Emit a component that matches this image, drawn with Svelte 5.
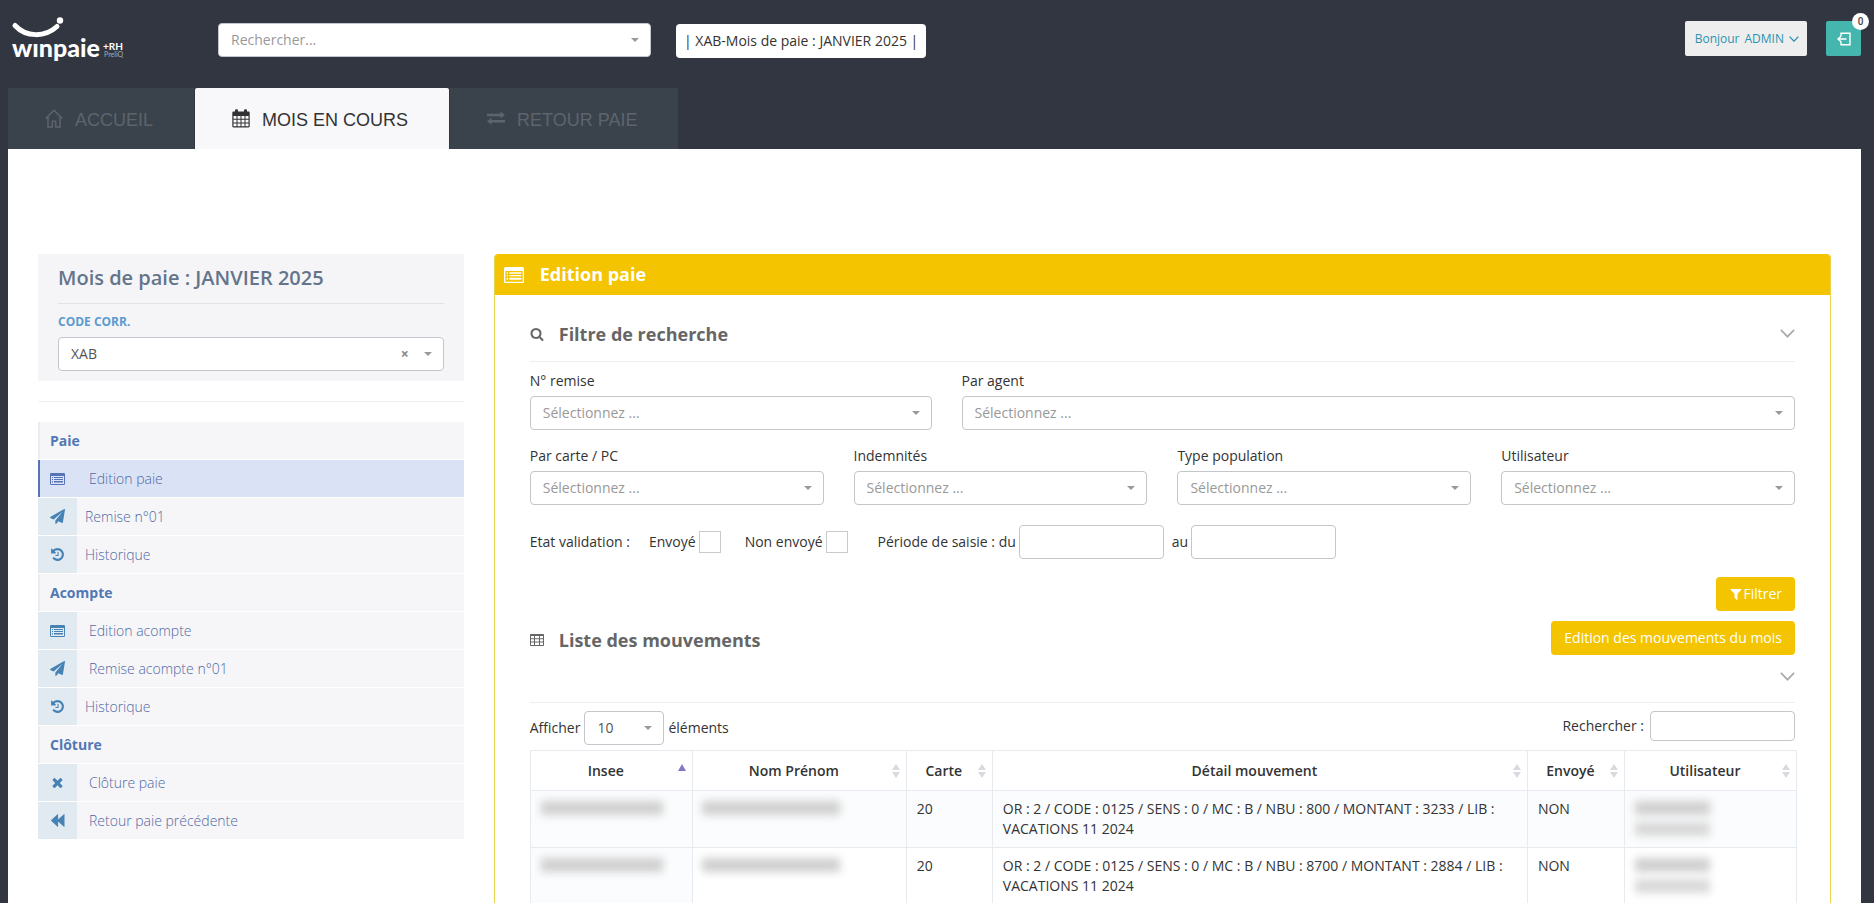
<script>
  const tabs = [
    { icon: 'home', label: 'ACCUEIL' },
    { icon: 'calendar', label: 'MOIS EN COURS', active: true },
    { icon: 'exchange', label: 'RETOUR PAIE' }
  ];
  const menu = [
    { head: 'Paie' },
    { icon: 'list', label: 'Edition paie', wide: true, active: true },
    { icon: 'plane', label: 'Remise n°01' },
    { icon: 'history', label: 'Historique' },
    { head: 'Acompte' },
    { icon: 'list', label: 'Edition acompte', wide: true },
    { icon: 'plane', label: 'Remise acompte n°01', wide: true },
    { icon: 'history', label: 'Historique' },
    { head: 'Clôture' },
    { icon: 'times', label: 'Clôture paie', wide: true },
    { icon: 'backward', label: 'Retour paie précédente', wide: true }
  ];
  const filters = [
    { id: 'remise', label: 'N° remise', span: 4 },
    { id: 'agent', label: 'Par agent', span: 8 },
    { id: 'carte', label: 'Par carte / PC', span: 3 },
    { id: 'indemnites', label: 'Indemnités', span: 3 },
    { id: 'population', label: 'Type population', span: 3 },
    { id: 'utilisateur', label: 'Utilisateur', span: 3 }
  ];
  const columns = [
    { label: 'Insee', share: 162, sorted: true },
    { label: 'Nom Prénom', share: 214 },
    { label: 'Carte', share: 86 },
    { label: 'Détail mouvement', share: 535 },
    { label: 'Envoyé', share: 97 },
    { label: 'Utilisateur', share: 172 }
  ];
  const total = columns.reduce((sum, c) => sum + c.share, 0);
  const rows = [
    { carte: '20', detail: 'OR : 2 / CODE : 0125 / SENS : 0 / MC : B / NBU : 800 / MONTANT : 3233 / LIB : VACATIONS 11 2024', sent: 'NON' },
    { carte: '20', detail: 'OR : 2 / CODE : 0125 / SENS : 0 / MC : B / NBU : 8700 / MONTANT : 2884 / LIB : VACATIONS 11 2024', sent: 'NON' }
  ];
</script>

{#snippet icon(name, size)}
  {#if name === 'home'}
    <svg width="18" height="19" viewBox="0 0 18 19" fill="none" stroke="currentColor" stroke-width="1.500" aria-hidden="true"><path d="M.7 9.500 9 1.200l8.300 8.300M3 8v10h4.300v-5.700h3.400V18H15V8" /></svg>
  {:else if name === 'calendar'}
    <svg width="18" height="19" viewBox="0 0 18 19" aria-hidden="true"><path fill="currentColor" fill-rule="evenodd" d="M1.500 2.500H3V1.700C3 .8 3.600.3 4.500.3S6 .8 6 1.700v.8h6v-.8c0-.9.6-1.400 1.500-1.400s1.500.5 1.500 1.400v.8h1.500c.7 0 1.200.5 1.200 1.200v13.600c0 .7-.5 1.200-1.200 1.200h-15c-.7 0-1.200-.5-1.200-1.200V3.700c0-.7.5-1.200 1.200-1.200zM1.500 7v2.700h3V7zm4 0v2.700h3V7zm4 0v2.700h3V7zm4 0v2.700h3V7zm-12 3.700v2.800h3v-2.800zm4 0v2.800h3v-2.800zm4 0v2.800h3v-2.800zm4 0v2.800h3v-2.800zm-12 3.800v2.700h3v-2.700zm4 0v2.700h3v-2.700zm4 0v2.700h3v-2.700zm4 0v2.700h3v-2.700z" /></svg>
  {:else if name === 'exchange'}
    <svg width="18" height="14" viewBox="0 0 18 14" fill="currentColor" aria-hidden="true"><path d="M0 2.700h13.500V.4L18 4l-4.500 3.500V5.200H0zM18 8.900H4.500V6.600L0 10.200l4.500 3.500v-2.300H18z" /></svg>
  {:else if name === 'list'}
    <svg width={size} height={size * 0.8} viewBox="0 0 15 12" aria-hidden="true"><path fill="currentColor" fill-rule="evenodd" d="M1.200 0h12.600C14.500 0 15 .5 15 1.200v9.600c0 .7-.5 1.200-1.200 1.200H1.200C.5 12 0 11.500 0 10.800V1.200C0 .5.5 0 1.200 0zM1 3v8h13V3zm1 1h1v1H2zm2 0h9v1H4zM2 6h1v1H2zm2 0h9v1H4zM2 8h1v1.500H2zm2 0h9v1.500H4z" /></svg>
  {:else if name === 'grid'}
    <svg width="14" height="12" viewBox="0 0 14 12" aria-hidden="true"><path fill="currentColor" fill-rule="evenodd" d="M1 0h12c.6 0 1 .4 1 1v10c0 .6-.4 1-1 1H1c-.6 0-1-.4-1-1V1c0-.6.4-1 1-1zm0 2v2.300h3V2zm4 0v2.300h4V2zm5 0v2.300h3V2zM1 5.300v2.300h3V5.300zm4 0v2.300h4V5.300zm5 0v2.300h3V5.300zM1 8.600V11h3V8.600zm4 0V11h4V8.600zm5 0V11h3V8.600z" /></svg>
  {:else if name === 'backward'}
    <svg width="14" height="13" viewBox="0 0 14 13" fill="currentColor" aria-hidden="true"><path d="M.3 6.100 6.600.2c.2-.2.5 0 .5.300v5l5.800-5.300c.3-.2.600 0 .6.300v12c0 .3-.3.500-.6.300L7.100 7.500v5c0 .3-.3.500-.5.300L.3 6.900c-.3-.3-.3-.5 0-.8z" /></svg>
  {:else if name === 'chevron'}
    <svg width={size} height={size * 0.6} viewBox="0 0 15 9" fill="none" stroke="currentColor" stroke-width={size > 12 ? 1.7 : 2} aria-hidden="true"><path d="M.9.9 7.500 7.700 14.100.9" /></svg>
  {:else}
    <svg width={size} height={size} viewBox="0 0 1792 1792" fill="currentColor" aria-hidden="true">
      {#if name === 'plane'}
        <path d="M1764 11q33 24 27 64l-256 1536q-5 29-32 45-14 8-31 8-11 0-24-5l-453-185-242 295q-18 23-49 23-13 0-22-4-19-7-30.500-23.500t-11.500-36.500v-349l864-1059-1069 925-395-162q-37-14-40-55-2-40 32-59l1664-960q15-9 32-9 20 0 36 11z" />
      {:else if name === 'history'}
        <path d="M1664 896q0 156-61 298t-164 245-245 164-298 61q-172 0-327-72.500t-264-204.500q-7-10-6.500-22.500t8.500-20.500l137-138q10-9 25-9 16 2 23 12 73 95 179 147t225 52q104 0 198.500-40.500t163.500-109.500 109.500-163.500 40.500-198.500-40.500-198.500-109.500-163.500-163.500-109.500-198.500-40.500q-98 0-188 35.500t-160 101.500l137 138q31 30 14 69-17 40-59 40h-448q-26 0-45-19t-19-45v-448q0-42 40-59 39-17 69 14l130 129q107-101 244.500-156.500t284.500-55.500q156 0 298 61t245 164 164 245 61 298zm-640-288v448q0 14-9 23t-23 9h-320q-14 0-23-9t-9-23v-64q0-14 9-23t23-9h224v-352q0-14 9-23t23-9h64q14 0 23 9t9 23z" />
      {:else if name === 'times'}
        <path d="M1490 1322q0 40-28 68l-136 136q-28 28-68 28t-68-28l-294-294-294 294q-28 28-68 28t-68-28l-136-136q-28-28-28-68t28-68l294-294-294-294q-28-28-28-68t28-68l136-136q28-28 68-28t68 28l294 294 294-294q28-28 68-28t68 28l136 136q28 28 28 68t-28 68l-294 294 294 294q28 28 28 68z" />
      {:else if name === 'search'}
        <path d="M1216 832q0-185-131.500-316.500t-316.500-131.500-316.500 131.500-131.500 316.500 131.500 316.500 316.500 131.500 316.500-131.500 131.500-316.500zm512 832q0 52-38 90t-90 38q-54 0-90-38l-343-342q-179 124-399 124-143 0-273.500-55.500t-225-150-150-225-55.500-273.500 55.500-273.500 150-225 225-150 273.500-55.500 273.500 55.500 225 150 150 225 55.500 273.500q0 220-124 399l343 343q37 37 37 90z" />
      {:else if name === 'filter'}
        <path d="M1595 295q17 41-14 70l-493 493v742q0 42-39 59-13 5-25 5-27 0-45-19l-256-256q-19-19-19-45v-486l-493-493q-31-29-14-70 17-39 59-39h1280q42 0 59 39z" />
      {/if}
    </svg>
  {/if}
{/snippet}

<div class="shell">
  <header>
    <a class="logo" href="#accueil" aria-label="winpaie">
      <svg width="120" height="50" viewBox="0 0 120 50" fill="#fff">
        <path d="M7 11.500C18 23.500 37 23.500 49 12.500" fill="none" stroke="#fff" stroke-width="5" stroke-linecap="round" />
        <circle cx="52" cy="6.500" r="3.200" />
        <text class="brand" x="4" y="43">wınpaie</text>
        <text class="plus" x="95" y="36">+RH</text>
        <text class="sub" x="96" y="43">PreliQ</text>
      </svg>
    </a>
    <div class="select search">
      <select aria-label="Rechercher" class="empty"><option>Rechercher...</option></select>
    </div>
    <div class="month">| XAB-Mois de paie : JANVIER 2025 |</div>
    <div class="account">
      <button class="user" type="button"><span>Bonjour</span><span>ADMIN</span>{@render icon('chevron', 10)}</button>
      <button class="logout" type="button" aria-label="Déconnexion">
        <svg width="14" height="14" viewBox="0 0 14 14" fill="none" stroke="#fff" stroke-width="1.400" aria-hidden="true"><path d="M4 4V1.200h9v11.600H4V10M9.500 7H1M4.200 3.900 1 7l3.200 3.100" /></svg>
        <span class="badge">0</span>
      </button>
    </div>
  </header>

  <nav class="tabs">
    {#each tabs as tab}
      <a href="#tab" class:active={tab.active}><span class="tabicon">{@render icon(tab.icon, 18)}</span>{tab.label}</a>
    {/each}
  </nav>

  <main>
    <aside>
      <section class="period">
        <h2>Mois de paie : JANVIER 2025</h2>
        <label for="code">CODE CORR.</label>
        <div class="select">
          <select id="code"><option>XAB</option></select>
          <button class="clear" type="button" aria-label="Effacer">×</button>
        </div>
      </section>
      <hr />
      <ul class="menu">
        {#each menu as item}
          <li>
            {#if item.head}
              <div class="head">{item.head}</div>
            {:else}
              <a href="#menu" class:active={item.active}>
                <span class="cell">{@render icon(item.icon, 15)}</span>
                <span class="name" class:wide={item.wide}>{item.label}</span>
              </a>
            {/if}
          </li>
        {/each}
      </ul>
    </aside>

    <section class="panel">
      <h1>{@render icon('list', 20)}Edition paie</h1>
      <div class="body">
        <div class="title">
          {@render icon('search', 14)}
          <h3>Filtre de recherche</h3>
          <button class="toggle" type="button" aria-label="Replier le filtre">{@render icon('chevron', 15)}</button>
        </div>
        <form onsubmit={(e) => e.preventDefault()}>
          <div class="fields">
            {#each filters as f}
              <div class="field" style:grid-column={`span ${f.span}`}>
                <label for={f.id}>{f.label}</label>
                <div class="select">
                  <select id={f.id} class="empty"><option>Sélectionnez ...</option></select>
                </div>
              </div>
            {/each}
          </div>
          <div class="state">
            <span class="lead">Etat validation :</span>
            <label>Envoyé<input type="checkbox" /></label>
            <label>Non envoyé<input type="checkbox" /></label>
            <label class="dates">Période de saisie : du<input type="text" /></label>
            <label>au<input type="text" /></label>
          </div>
          <div class="submit">
            <button class="primary" type="submit">{@render icon('filter', 14)}Filtrer</button>
          </div>
        </form>

        <div class="title list">
          {@render icon('grid', 14)}
          <h3>Liste des mouvements</h3>
          <div class="tools">
            <button class="primary" type="button">Edition des mouvements du mois</button>
            <button class="toggle" type="button" aria-label="Replier la liste">{@render icon('chevron', 15)}</button>
          </div>
        </div>

        <div class="controls">
          <label for="length">Afficher</label>
          <div class="select length"><select id="length"><option>10</option></select></div>
          <span>éléments</span>
          <label class="find">Rechercher :<input type="search" /></label>
        </div>

        <table>
          <colgroup>
            {#each columns as c}<col style:width={`${(c.share / total) * 100}%`} />{/each}
          </colgroup>
          <thead>
            <tr>
              {#each columns as c}
                <th scope="col">{c.label}<i class:sorted={c.sorted}></i></th>
              {/each}
            </tr>
          </thead>
          <tbody>
            {#each rows as r}
              <tr>
                <td class="hidden"><div class="mask insee"></div></td>
                <td class="hidden"><div class="mask fullname"></div></td>
                <td>{r.carte}</td>
                <td>{r.detail}</td>
                <td>{r.sent}</td>
                <td class="hidden"><div class="mask agent"></div><div class="mask agent second"></div></td>
              </tr>
            {/each}
          </tbody>
        </table>
      </div>
    </section>
  </main>
</div>

<style>
  :global(body) {
    margin: 0;
    background: #313641;
    overflow: hidden;
  }
  * {
    box-sizing: border-box;
  }
  .shell {
    min-height: 100vh;
    padding: 0 13px 0 8px;
    display: flex;
    flex-direction: column;
    font: 14px/20px 'Open Sans', sans-serif;
    color: #333;
  }
  svg {
    display: block;
    flex: none;
  }
  button,
  input,
  select {
    font: inherit;
  }
  button {
    cursor: pointer;
  }
  a {
    text-decoration: none;
  }
  h1,
  h2,
  h3 {
    margin: 0;
  }

  header {
    height: 88px;
    display: flex;
    align-items: flex-start;
  }
  .logo {
    width: 210px;
    padding-top: 14px;
  }
  .brand {
    font: 900 25px 'Lato', sans-serif;
  }
  .plus {
    font: 700 10px 'Lato', sans-serif;
  }
  .sub {
    font: 7px 'Lato', sans-serif;
    fill: #a9adb4;
  }
  .search {
    width: 433px;
    margin-top: 23px;
  }
  .month {
    margin: 24px 0 0 25px;
    padding: 7px 8px;
    border-radius: 4px;
    background: #fff;
    white-space: nowrap;
  }
  .account {
    margin: 21px 0 0 auto;
    display: flex;
    gap: 19px;
  }
  .user {
    height: 35px;
    padding: 0 8px 0 10px;
    border: 0;
    border-radius: 2px;
    background: #eee;
    color: #2b93ae;
    font-size: 12px;
    display: flex;
    align-items: center;
    gap: 5px;
  }
  .logout {
    position: relative;
    width: 35px;
    height: 35px;
    padding: 0 0 0 11px;
    border: 0;
    border-radius: 2px;
    background: #44b6ae;
  }
  .badge {
    position: absolute;
    top: -8px;
    right: -8px;
    width: 17px;
    height: 17px;
    border-radius: 50%;
    background: #fff;
    color: #444;
    font: 500 10px/17px 'Roboto', sans-serif;
    text-align: center;
  }

  .select {
    position: relative;
  }
  .select::after {
    content: '';
    position: absolute;
    right: 12px;
    top: 15px;
    border: 4px solid transparent;
    border-top-color: #999;
    border-bottom: 0;
    pointer-events: none;
  }
  select {
    display: block;
    width: 100%;
    height: 34px;
    padding: 0 24px 0 12px;
    border: 1px solid #c4c6cc;
    border-radius: 4px;
    background: #fff;
    color: #555;
    appearance: none;
  }
  .empty {
    color: #999;
  }
  .clear {
    position: absolute;
    right: 35px;
    top: 7px;
    padding: 0;
    border: 0;
    background: none;
    color: #888;
    font-weight: 700;
  }

  .tabs {
    display: flex;
    gap: 1px;
  }
  .tabs a {
    height: 61px;
    padding: 3px 41px 0 37px;
    display: flex;
    align-items: center;
    background: #3a424b;
    color: #5d646d;
    font: 18px/20px 'Liberation Sans', sans-serif;
  }
  .tabs .active {
    background: #f8f8fa;
    color: #333;
    border-radius: 2px 2px 0 0;
  }
  .tabicon {
    margin: 0 12px 4px 0;
  }

  main {
    flex: 1;
    padding: 105px 30px 0;
    background: #fff;
    display: grid;
    grid-template-columns: repeat(12, minmax(0, 1fr));
    column-gap: 30px;
  }
  aside {
    grid-column: span 3;
  }
  .period {
    padding: 9px 20px 10px;
    background: #f5f5f7;
  }
  h2 {
    padding: 0 0 11px;
    border-bottom: 1px solid #dfe2e6;
    color: #64748b;
    font-size: 20px;
    font-weight: 600;
    line-height: 29px;
  }
  .period label {
    display: block;
    padding: 8px 0 5px;
    color: #5b9bd1;
    font-size: 12px;
    font-weight: 700;
  }
  hr {
    margin: 20px 0;
    border: 0;
    border-top: 1px solid #eef0f2;
  }
  .menu {
    margin: 0;
    padding: 0;
    list-style: none;
    display: grid;
    gap: 1px;
  }
  .head,
  .menu a {
    height: 37px;
    display: flex;
    align-items: center;
    background: #f6f6f8;
  }
  .head {
    padding-left: 10px;
    border-left: 2px solid #e9edf1;
    color: #5178b4;
    font-weight: 700;
  }
  .menu a {
    color: #5068a4;
    font-weight: 300;
  }
  .cell {
    align-self: stretch;
    width: 39px;
    display: grid;
    place-items: center;
    background: #e1e9f1;
    color: #4682b4;
  }
  .name {
    padding-left: 8px;
  }
  .name.wide {
    padding-left: 12px;
  }
  .menu .active {
    background: #dae3f5;
    box-shadow: inset 2px 0 #5673b8;
  }
  .active .cell {
    background: none;
    color: #5673b8;
  }

  .panel {
    grid-column: span 9;
    border: 1px solid #e9d34c;
    border-top-color: #f4c400;
    border-bottom: 0;
    border-radius: 4px 4px 0 0;
  }
  h1 {
    height: 40px;
    padding: 0 9px 1px;
    display: flex;
    align-items: center;
    gap: 16px;
    border-radius: 2px 2px 0 0;
    background: #f4c400;
    color: #fff;
    font-size: 18px;
    font-weight: 700;
    line-height: 35px;
  }
  .body {
    padding: 12px 35px 0;
  }
  .title {
    height: 55px;
    padding-bottom: 1px;
    display: flex;
    align-items: center;
    gap: 15px;
    border-bottom: 1px solid #eee;
    color: #666;
  }
  h3 {
    font-size: 18px;
    font-weight: 700;
    line-height: 20px;
  }
  .toggle {
    margin-left: auto;
    padding: 0;
    border: 0;
    background: none;
    color: #aaa;
  }
  .fields {
    padding-top: 9px;
    display: grid;
    grid-template-columns: repeat(12, minmax(0, 1fr));
    gap: 16px 30px;
  }
  .field label {
    display: block;
    margin-bottom: 5px;
  }
  .state {
    margin-top: 20px;
    display: flex;
    align-items: center;
  }
  .state label {
    display: flex;
    align-items: center;
    gap: 3px;
    margin-right: 8px;
  }
  .state label:has([type='checkbox']) {
    margin-right: 24px;
  }
  .state .dates {
    margin-left: 6px;
  }
  .lead {
    margin-right: 19px;
  }
  [type='checkbox'] {
    width: 22px;
    height: 22px;
    margin: 0;
    border: 1px solid #c8cacf;
    background: #fff;
    appearance: none;
  }
  [type='text'],
  [type='search'] {
    width: 145px;
    height: 34px;
    padding: 6px 12px;
    border: 1px solid #c4c6cc;
    border-radius: 4px;
    background: #fff;
  }
  .submit {
    margin-top: 18px;
    display: flex;
    justify-content: flex-end;
  }
  .primary {
    height: 34px;
    padding: 0 13px;
    display: flex;
    align-items: center;
    border: 0;
    border-radius: 4px;
    background: #f4c400;
    color: #fff;
  }
  .title.list {
    height: 82px;
    margin-top: 10px;
    padding: 0;
    align-items: flex-start;
  }
  .list > :global(svg) {
    margin-top: 13px;
  }
  .list h3 {
    padding-top: 9px;
  }
  .tools {
    margin-left: auto;
    display: grid;
    gap: 17px;
    justify-items: end;
  }
  .controls {
    padding-top: 8px;
    display: flex;
    align-items: center;
    gap: 4px;
  }
  .length {
    width: 80px;
  }
  .find {
    margin-left: auto;
    align-self: flex-start;
    display: flex;
    align-items: center;
    gap: 6px;
  }
  [type='search'] {
    height: 30px;
  }

  table {
    width: calc(100% + 2px);
    margin: 5px -2px 0 0;
    table-layout: fixed;
    border-collapse: collapse;
  }
  th,
  td {
    border: 1px solid #e7ebef;
    vertical-align: top;
  }
  th {
    position: relative;
    height: 40px;
    padding: 10px 18px 8px 7px;
    font-weight: 600;
    text-align: center;
  }
  th i {
    position: absolute;
    right: 6px;
    top: 50%;
    margin-top: -7px;
  }
  th i::before,
  th i::after {
    content: '';
    display: block;
    border: 4px solid transparent;
  }
  th i::before {
    border-top: 0;
    border-bottom: 6px solid #d9d9de;
  }
  th i::after {
    margin-top: 2px;
    border-bottom: 0;
    border-top: 6px solid #d9d9de;
  }
  th i.sorted::before {
    border-bottom: 7px solid #7f79c8;
  }
  th i.sorted::after {
    border-color: transparent;
  }
  td {
    padding: 8px 10px;
  }
  tbody tr:nth-child(odd) {
    background: #fbfcfd;
  }
  tbody tr:nth-child(even) td:first-child {
    background: #fbfcfd;
  }
  td.hidden {
    padding: 10px 0 0;
  }
  .mask {
    height: 14px;
    background: #cfcfcf;
    filter: blur(4px);
  }
  .insee {
    width: 76%;
    margin-left: 10px;
  }
  .fullname {
    width: 65%;
    margin-left: 9px;
  }
  .agent {
    width: 44%;
    margin-left: 10px;
  }
  .second {
    margin-top: 7px;
    opacity: 0.8;
  }
</style>
